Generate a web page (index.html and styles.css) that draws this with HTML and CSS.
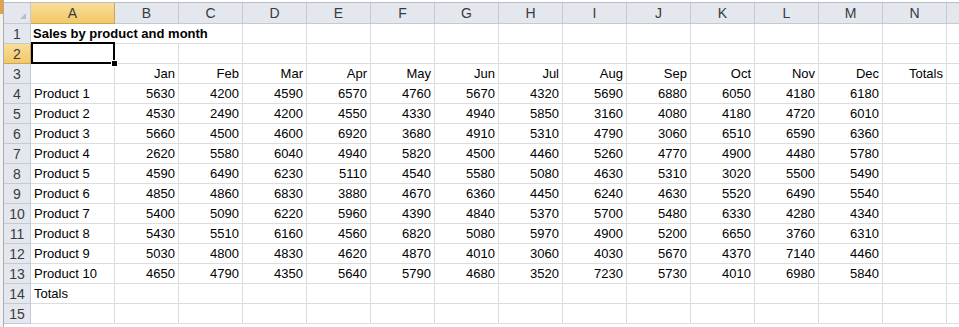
FILE: index.html
```html
<!DOCTYPE html>
<html lang="en">
<head>
  <meta charset="UTF-8" />
  <meta name="viewport" content="width=device-width, initial-scale=1.0" />
  <title>Sales by product and month</title>
  <link rel="stylesheet" href="styles.css">
</head>
<body>
  <div class="edge"></div>
  <div class="workbook">
    <div class="formula-edge"></div>
    <div class="sheet" id="sheet"></div>
  </div>

  <script>
    const letters = "ABCDEFGHIJKLMN".split("");
    const months = ["Jan", "Feb", "Mar", "Apr", "May", "Jun", "Jul", "Aug", "Sep", "Oct", "Nov", "Dec"];
    const sales = [
      [5630, 4200, 4590, 6570, 4760, 5670, 4320, 5690, 6880, 6050, 4180, 6180],
      [4530, 2490, 4200, 4550, 4330, 4940, 5850, 3160, 4080, 4180, 4720, 6010],
      [5660, 4500, 4600, 6920, 3680, 4910, 5310, 4790, 3060, 6510, 6590, 6360],
      [2620, 5580, 6040, 4940, 5820, 4500, 4460, 5260, 4770, 4900, 4480, 5780],
      [4590, 6490, 6230, 5110, 4540, 5580, 5080, 4630, 5310, 3020, 5500, 5490],
      [4850, 4860, 6830, 3880, 4670, 6360, 4450, 6240, 4630, 5520, 6490, 5540],
      [5400, 5090, 6220, 5960, 4390, 4840, 5370, 5700, 5480, 6330, 4280, 4340],
      [5430, 5510, 6160, 4560, 6820, 5080, 5970, 4900, 5200, 6650, 3760, 6310],
      [5030, 4800, 4830, 4620, 4870, 4010, 3060, 4030, 5670, 4370, 7140, 4460],
      [4650, 4790, 4350, 5640, 5790, 4680, 3520, 7230, 5730, 4010, 6980, 5840]
    ];

    const sheet = document.getElementById("sheet");

    function cell(text, className) {
      const div = document.createElement("div");
      div.className = className;
      div.textContent = text;
      sheet.appendChild(div);
      return div;
    }

    // column headers, plus the edge of column O
    cell("", "corner");
    letters.forEach(letter => {
      cell(letter, letter === "A" ? "col-head active-head" : "col-head");
    });
    cell("", "col-head");

    for (let row = 1; row <= 15; row++) {
      cell(row, row === 2 ? "row-head active-head" : "row-head");

      let values = new Array(letters.length + 1).fill("");
      if (row === 3) {
        values = ["", ...months, "Totals", ""];
      } else if (row >= 4 && row <= 13) {
        values = ["Product " + (row - 3), ...sales[row - 4], "", ""];
      } else if (row === 14) {
        values[0] = "Totals";
      }

      if (row === 1) {
        cell("Sales by product and month", "cell title");
        values = values.slice(3);
      }

      values.forEach((value, i) => {
        const isLabel = row !== 1 && i === 0;
        const div = cell(value, isLabel ? "cell" : "cell num");
        if (row === 2 && i === 0) div.classList.add("active");
      });
    }
  </script>
</body>
</html>
```

FILE: styles.css
```css
:root {
  --grid-line: #dadcdd;
  --head-bg: #e4e8ee;
  --head-line: #c3cad4;
  --head-text: #3a3a3a;
  --active-bg: linear-gradient(#f9dd9b, #f3c867);
  --active-line: #c9a65a;
}

body {
  margin: 0;
  padding: 0;
  height: 327px;
  overflow: hidden;
  display: flex;
  background-color: #ffffff;
  font-family: "Liberation Sans", Arial, sans-serif;
  font-size: 13px;
  color: #000000;
}

.edge {
  width: 3px;
  flex-shrink: 0;
  border-right: 1px solid #a9adb3;
  background: linear-gradient(#e9a140 0 14px, #f2f2f2 14px);
}

.workbook {
  flex: 1;
  overflow: hidden;
}

.formula-edge {
  height: 2px;
  border-bottom: 1px solid #b9bec6;
  background-color: #ffffff;
}

.sheet {
  display: grid;
  grid-template-columns: 27px 84px repeat(13, 64px) 64px;
  grid-template-rows: 21px;
  grid-auto-rows: 20px;
}

.sheet > div {
  box-sizing: border-box;
  border-right: 1px solid var(--grid-line);
  border-bottom: 1px solid var(--grid-line);
  white-space: nowrap;
  overflow: hidden;
  line-height: 20px;
}

.corner,
.col-head,
.row-head {
  background-color: var(--head-bg);
  color: var(--head-text);
  text-align: center;
  font-size: 14px;
}

.sheet > .corner,
.sheet > .col-head,
.sheet > .row-head {
  border-right-color: var(--head-line);
  border-bottom-color: var(--head-line);
}

.corner {
  position: relative;
}

.corner::after {
  content: "";
  position: absolute;
  right: 4px;
  bottom: 4px;
  border-left: 6px solid transparent;
  border-bottom: 6px solid #b7bec8;
}

.sheet > .active-head {
  background: var(--active-bg);
  border-right-color: var(--active-line);
  border-bottom-color: var(--active-line);
}

.cell {
  padding: 0 3px;
}

.title {
  grid-column: span 3;
  font-weight: bold;
  padding-left: 2px;
}

.num {
  text-align: right;
}

.sheet > .active {
  position: relative;
  overflow: visible;
  z-index: 1;
}

.active::after {
  content: "";
  position: absolute;
  top: -2px;
  left: 0;
  width: 84px;
  height: 22px;
  box-sizing: border-box;
  border: 2px solid #000000;
}

.active::before {
  content: "";
  position: absolute;
  right: -3px;
  bottom: -3px;
  width: 5px;
  height: 5px;
  box-sizing: border-box;
  background-color: #000000;
  box-shadow: 0 0 0 1px #ffffff;
  z-index: 2;
}
```
